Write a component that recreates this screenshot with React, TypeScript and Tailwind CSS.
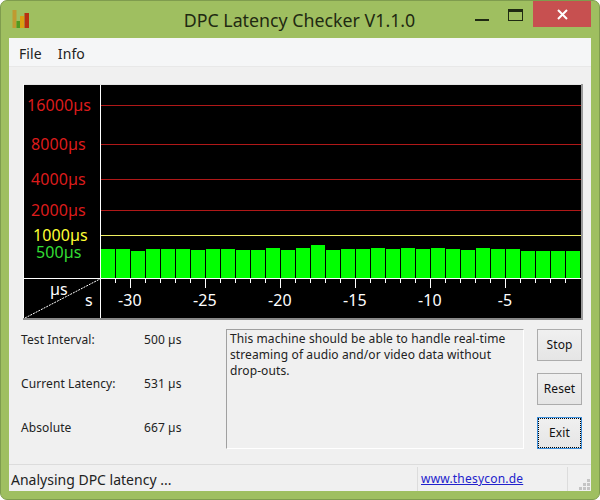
const tops = [249,249,251,249,249,249,250,249,249,250,250,248,250,248,245,250,249,249,248,249,248,249,248,249,250,248,249,249,251,251,251,251];
const ticks = Array.from({ length: 31 }, (_, i) => 115 + 15 * i);
const chartFont = '"Noto Sans", sans-serif';

function Chart() {
  const ox = 23;
  const oy = 84;
  const hLines: [number, string][] = [[105, "#b01818"], [144, "#b01818"], [179, "#b01818"], [210, "#b01818"], [235, "#f0f060"]];
  const labels: [string, number, number, string][] = [
    ["16000µs", 27, 111, "#dc1c1c"],
    ["8000µs", 31, 150, "#dc1c1c"],
    ["4000µs", 31, 185, "#dc1c1c"],
    ["2000µs", 31, 216, "#dc1c1c"],
    ["1000µs", 33, 241, "#ffff33"],
    ["500µs", 36, 258, "#33dd33"],
  ];
  const xs: [string, number][] = [["-30", 130], ["-25", 205], ["-20", 280], ["-15", 355], ["-10", 430], ["-5", 505]];
  return (
    <svg width={560} height={236} viewBox={`${ox} ${oy} 560 236`} className="block">
      <rect x={ox} y={oy} width={560} height={236} fill="#f0f0f0" />
      <rect x={24} y={85} width={557} height={233} fill="#000" />
      {hLines.map(([y, c]) => <rect key={y} x={100} y={y} width={481} height={1} fill={c} />)}
      {tops.map((t, i) => <rect key={i} x={101 + 15 * i} y={t} width={14} height={278 - t} fill="#00ff00" />)}
      <rect x={24} y={278} width={557} height={1} fill="#fff" />
      <rect x={100} y={85} width={1} height={233} fill="#fff" />
      {ticks.map((x) => <rect key={x} x={x} y={279} width={1} height={(x - 130) % 75 === 0 ? 9 : 4} fill="#fff" />)}
      <line x1={25} y1={318} x2={100} y2={279} stroke="#fff" strokeWidth={1} strokeDasharray="2 1" />
      {labels.map(([s, x, y, c]) => <text key={s} x={x} y={y} fill={c} fontSize={16} fontFamily={chartFont}>{s}</text>)}
      <text x={50} y={295} fill="#fff" fontSize={16} fontFamily={chartFont}>µs</text>
      <text x={85} y={306} fill="#fff" fontSize={16} fontFamily={chartFont}>s</text>
      {xs.map(([s, x]) => <text key={s} x={x} y={306} fill="#fff" fontSize={16} fontFamily={chartFont} textAnchor="middle">{s}</text>)}
      <rect x={23} y={84} width={560} height={1} fill="#e4e4e4" />
      <rect x={23} y={84} width={1} height={235} fill="#fff" />
      <rect x={23} y={318} width={560} height={2} fill="#8a8a8a" />
      <rect x={581} y={84} width={2} height={236} fill="#9a9a9a" />
    </svg>
  );
}

function AppIcon() {
  return (
    <svg width={18} height={19} viewBox="0 0 18 19">
      <rect x="0.5" y="0" width="4" height="18" fill="#c09a30" />
      <rect x="4.5" y="11" width="3.5" height="7" fill="#4f9a20" />
      <rect x="8" y="6" width="4" height="12" fill="#d8a010" />
      <rect x="12.5" y="3" width="4.5" height="15" fill="#b83010" />
    </svg>
  );
}

function Grip() {
  const dots = [[8, 0], [4, 4], [8, 4], [0, 8], [4, 8], [8, 8]];
  return (
    <svg width={11} height={11} viewBox="0 0 11 11">
      {dots.map(([x, y]) => <rect key={`${x}-${y}`} x={x} y={y} width={3} height={3} fill="#c4c4c4" />)}
    </svg>
  );
}

function Btn({ label, focus }: { label: string; focus?: boolean }) {
  return (
    <button
      className={`h-[32px] w-[45px] border bg-gradient-to-b from-[#f0f0f0] to-[#e5e5e5] text-[12px] text-[#111] ${
        focus ? "border-[#3c8fdc] outline-1 -outline-offset-2 outline-dotted outline-black" : "border-[#acacac]"
      }`}
    >
      {label}
    </button>
  );
}

function Stat({ label, value }: { label: string; value: string }) {
  return (
    <div className="flex h-[16px] items-center">
      <span className="w-[123px]">{label}</span>
      <span>{value}</span>
    </div>
  );
}

export default function App() {
  return (
    <div className="h-[500px] w-[600px] bg-white font-['Noto_Sans',sans-serif] text-[12px] tracking-[0.1px] text-[#222]">
      <div className="flex h-[500px] w-[600px] flex-col rounded-[7px] border border-[#7f9c4e] bg-[#9fbf60] px-[8px] pb-[8px]">
        <div className="flex h-[37px] shrink-0 items-start">
          <div className="ml-[3px] mt-[9px]"><AppIcon /></div>
          <div className="flex-1 pl-[94px] pt-[6px] text-center text-[17.8px] tracking-normal text-[#1f2a12]">DPC Latency Checker V1.1.0</div>
          <div className="flex h-[26px] items-start">
            <div className="mt-[18px] h-[2px] w-[14px] bg-[#1f2a12]" />
            <div className="ml-[19px] mt-[8px] h-[12px] w-[15px] border border-t-[3px] border-[#1f2a12]" />
            <div className="ml-[10px] flex h-[26px] w-[58px] items-center justify-center bg-[#c75050] text-white">
              <svg width={11} height={11} viewBox="0 0 11 11"><path d="M1 1 L10 10 M10 1 L1 10" stroke="#fff" strokeWidth={2} /></svg>
            </div>
          </div>
        </div>
        <div className="flex min-h-0 flex-1 flex-col bg-[#f0f0f0]">
          <div className="flex h-[29px] shrink-0 items-center gap-[16px] border-b border-[#e8e8e8] bg-[#f5f6f7] pl-[10px] pt-[2px] text-[14px] text-[#222]">
            <span>File</span>
            <span>Info</span>
          </div>
          <div className="ml-[14px] mt-[17px]"><Chart /></div>
          <div className="flex flex-1 pl-[12px] pt-[9px]">
            <div className="flex h-[117px] w-[205px] flex-col justify-between pt-[3px]">
              <Stat label="Test Interval:" value="500 µs" />
              <Stat label="Current Latency:" value="531 µs" />
              <div className="mb-[10px]"><Stat label="Absolute" value="667 µs" /></div>
            </div>
            <div className="h-[120px] w-[298px] border border-b-white border-l-[#a0a0a0] border-r-white border-t-[#a0a0a0] pl-[3px] pt-[1px] leading-[16px]">
              This machine should be able to handle real-time streaming of audio and/or video data without<br />drop-outs.
            </div>
            <div className="ml-[13px] flex flex-col gap-[12px]">
              <Btn label="Stop" />
              <Btn label="Reset" />
              <Btn label="Exit" focus />
            </div>
          </div>
          <div className="flex h-[27px] shrink-0 items-center border-t border-[#dcdcdc] pt-[2px] text-[14px] tracking-normal">
            <div className="w-[408px] pl-[2px]">Analysing DPC latency ...</div>
            <div className="flex h-full w-[150px] items-center border-l border-[#dcdcdc] pl-[3px] text-[12px] tracking-[0.2px] text-[#2222cc] underline">www.thesycon.de</div>
            <div className="flex h-full flex-1 items-end justify-end border-l border-[#dcdcdc] pb-[1px] pr-[1px]"><Grip /></div>
          </div>
        </div>
      </div>
    </div>
  );
}
